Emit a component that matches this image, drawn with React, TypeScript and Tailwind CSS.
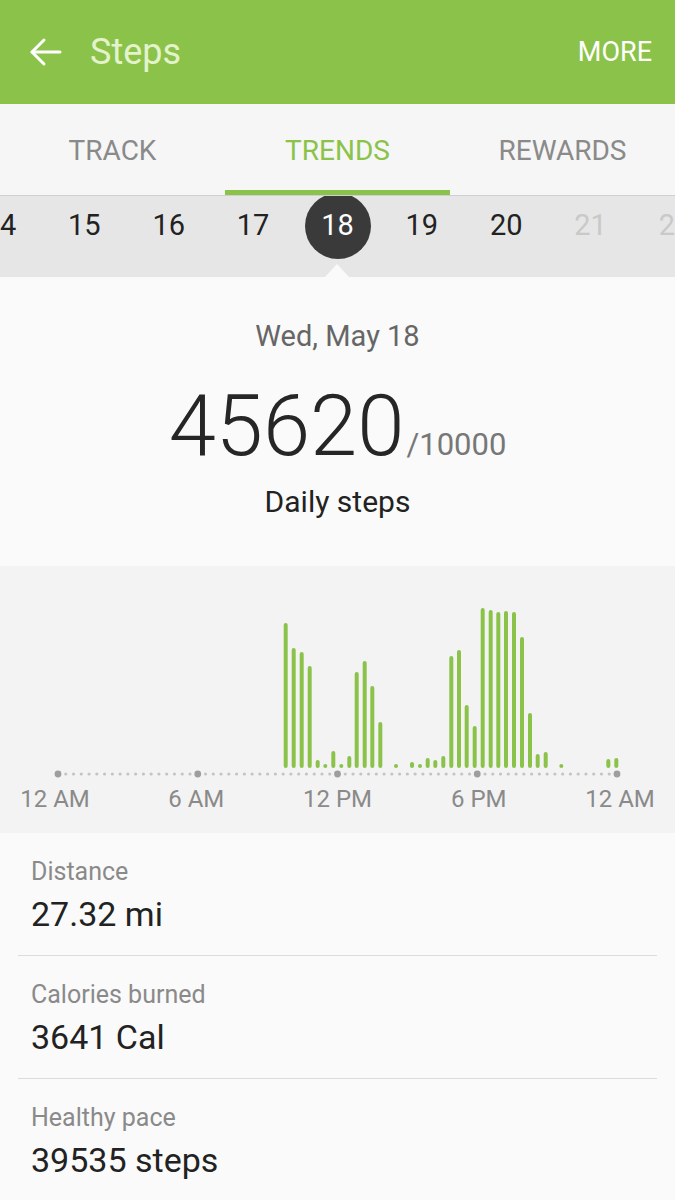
import { useState } from "react";

const days = [
  { n: "14", dim: false },
  { n: "15", dim: false },
  { n: "16", dim: false },
  { n: "17", dim: false },
  { n: "18", dim: false },
  { n: "19", dim: false },
  { n: "20", dim: false },
  { n: "21", dim: true },
  { n: "22", dim: true },
];

// [x, height] of the 20-minute bars, baseline at y=202 in the svg
const bars: [number, number][] = [
  [285.7, 145], [293.7, 120], [301.7, 116], [309.7, 102], [317.7, 8], [325.3, 4],
  [333.3, 17], [341.3, 3], [349.3, 12], [356.7, 96], [364.7, 107], [372.3, 82],
  [380.3, 46], [396, 3], [412, 6], [420, 3], [427.7, 10], [435.3, 8], [443.3, 12],
  [451.3, 112], [459, 118], [466.7, 63], [474.7, 42], [482.7, 160], [490.7, 158],
  [498.3, 156], [506, 157], [514, 156], [522, 131], [530, 55], [537.7, 14],
  [545.7, 16], [561.3, 3], [608.3, 9], [616.3, 10],
];

const stats = [
  { label: "Distance", value: "27.32 mi" },
  { label: "Calories burned", value: "3641 Cal" },
  { label: "Healthy pace", value: "39535 steps" },
];

const tabs = ["TRACK", "TRENDS", "REWARDS"];

const HourChart = () => {
  const dots = Array.from({ length: 73 }, (_, i) => 58 + i * ((617 - 58) / 72));
  return (
    <svg width="675" height="215" viewBox="0 0 675 215" className="block">
      {dots.map((x, i) =>
        i % 18 === 0 ? (
          <circle key={i} cx={x} cy={208} r={3.4} fill="#9e9e9e" />
        ) : (
          <circle key={i} cx={x} cy={208} r={1.6} fill="#c4c4c4" />
        )
      )}
      {bars.map(([x, h], i) => (
        <line
          key={i}
          x1={x}
          x2={x}
          y1={200}
          y2={Math.min(200, 202 - h + 2)}
          stroke="#8bc34a"
          strokeWidth={4}
          strokeLinecap="round"
        />
      ))}
    </svg>
  );
};

const App = () => {
  const [tab, setTab] = useState(1);

  return (
    <div className="w-[675px] min-h-[1200px] bg-[#fafafa] font-['Roboto','Liberation_Sans',sans-serif]">
      {/* app bar */}
      <div className="h-[104px] bg-[#8bc34a] flex items-center pl-[29px] pr-[23px]">
        <svg width="33" height="32" viewBox="0 0 33 32" fill="none" stroke="#ffffff" strokeWidth="3" strokeLinecap="round" strokeLinejoin="round">
          <path d="M3 16H31" />
          <path d="M15 4L3 16L15 28" />
        </svg>
        <span className="ml-[28px] text-[36px] text-[#e4f3cc] leading-none">Steps</span>
        <span className="ml-auto text-[27px] text-white leading-none">MORE</span>
      </div>

      {/* tabs */}
      <div className="h-[92px] bg-[#f6f6f6] flex border-b border-[#cfcfcf]">
        {tabs.map((t, i) => (
          <button
            key={t}
            onClick={() => setTab(i)}
            className="flex-1 flex flex-col items-center justify-end"
          >
            <span
              className={
                i === tab
                  ? "text-[28px] leading-none text-[#8bc34a] mb-[25px]"
                  : "text-[28px] leading-none text-[#8a8a8a] mb-[25px]"
              }
            >
              {t}
            </span>
            <span className={i === tab ? "h-[5px] w-full bg-[#8bc34a]" : "h-[5px] w-full"} />
          </button>
        ))}
      </div>

      {/* date strip */}
      <div className="relative h-[81px] bg-[#e6e6e6] overflow-hidden">
        <div className="flex h-full items-center pb-[22px] -ml-[42.19px]">
          {days.map((d, i) =>
            i === 4 ? (
              <div key={d.n} className="w-[84.375px] shrink-0 flex justify-center">
                <div className="w-[66px] h-[66px] rounded-full bg-[#3a3a3a] flex items-center justify-center text-white text-[29px] leading-none">
                  {d.n}
                </div>
              </div>
            ) : (
              <div
                key={d.n}
                className={
                  d.dim
                    ? "w-[84.375px] shrink-0 text-center text-[29px] leading-none text-[#c9c9c9]"
                    : "w-[84.375px] shrink-0 text-center text-[29px] leading-none text-[#222222]"
                }
              >
                {d.n}
              </div>
            )
          )}
        </div>
        <div className="absolute bottom-0 left-[325px] w-0 h-0 border-l-[12.5px] border-r-[12.5px] border-b-[13px] border-l-transparent border-r-transparent border-b-[#fafafa]" />
      </div>

      {/* summary */}
      <div className="bg-[#fafafa] flex flex-col items-center pt-[41px] pb-[46px]">
        <div className="text-[29px] leading-[36px] text-[#666666]">Wed, May 18</div>
        <div className="flex items-baseline mt-[30px] h-[84px]">
          <span className="text-[85px] leading-none font-light text-[#262626]">45620</span>
          <span className="text-[31px] leading-none text-[#777777] ml-[2px]">/10000</span>
        </div>
        <div className="text-[30px] leading-[36px] text-[#222222] mt-[16px]">Daily steps</div>
      </div>

      {/* hourly chart */}
      <div className="bg-[#f3f3f3] pb-[21px]">
        <HourChart />
        <div className="flex justify-between px-[20px] mt-[5px]">
          {["12 AM", "6 AM", "12 PM", "6 PM", "12 AM"].map((l, i) => (
            <span key={i} className="w-[70px] text-center text-[24px] leading-[26px] text-[#8a8a8a] whitespace-nowrap">
              {l}
            </span>
          ))}
        </div>
      </div>

      {/* stats */}
      <div className="bg-[#fafafa] px-[18px]">
        {stats.map((s) => (
          <div key={s.label} className="border-b border-[#dcdcdc] pt-[24px] pb-[21px] px-[13px]">
            <div className="text-[25px] leading-[30px] text-[#8a8a8a]">{s.label}</div>
            <div className="text-[34px] leading-[40px] text-[#222222] mt-[7px]">{s.value}</div>
          </div>
        ))}
      </div>
    </div>
  );
};

export default App;
